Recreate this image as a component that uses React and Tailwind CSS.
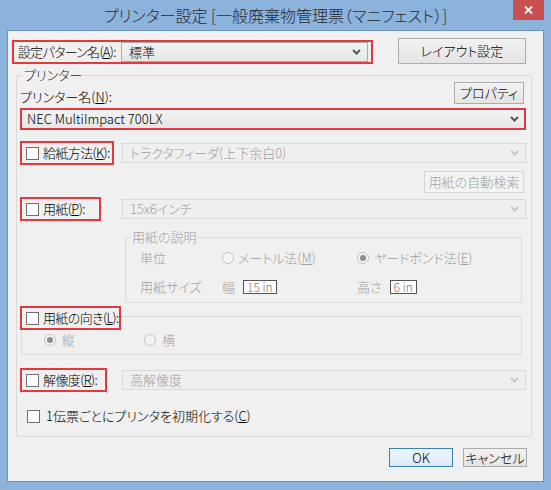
import React from "react";
import clsx from "clsx";

// Win8-style printer settings dialog

const Key = ({ children }) => (
  <span className="underline underline-offset-[1px] decoration-1">{children}</span>
);

const Chevron = ({ disabled = false }) => (
  <svg width="9" height="6" viewBox="0 0 9 6" className="shrink-0">
    <path
      d="M1 1l3.5 3.5L8 1"
      fill="none"
      stroke={disabled ? "#c8c8c8" : "#555555"}
      strokeWidth="2"
    />
  </svg>
);

const Select = ({ value, disabled = false, className }) => (
  <div
    className={clsx(
      "flex items-center justify-between pl-[7px] pr-[6px] border",
      disabled
        ? "border-[#d9d9d9] bg-[#efefef] text-[#a0a0a0]"
        : "border-[#acacac] bg-linear-to-b from-[#f3f3f3] to-[#e6e6e6] text-black",
      className
    )}>
    <span className="whitespace-nowrap">{value}</span>
    <Chevron disabled={disabled} />
  </div>
);

const Button = ({ children, disabled = false, primary = false, className }) => (
  <div
    className={clsx(
      "flex items-center justify-center border whitespace-nowrap",
      disabled && "border-[#d5d5d5] bg-[#f4f4f4] text-[#a0a0a0]",
      primary &&
        "border-[#3c7fb1] bg-linear-to-b from-[#edf5fc] to-[#dcebfa] text-black",
      !disabled &&
        !primary &&
        "border-[#acacac] bg-linear-to-b from-[#f2f2f2] to-[#e4e4e4] text-black",
      className
    )}>
    {children}
  </div>
);

const Checkbox = () => (
  <div className="w-[13px] h-[13px] shrink-0 border border-[#707070] bg-white" />
);

const Radio = ({ checked = false }) => (
  <div className="w-[12px] h-[12px] shrink-0 rounded-full border border-[#c4c4c4] bg-[#f4f4f4] flex items-center justify-center">
    {checked && <div className="w-[6px] h-[6px] rounded-full bg-[#8c8c8c]" />}
  </div>
);

const RedBox = ({ className, children }) => (
  <div
    className={clsx(
      "flex items-center border-2 border-[#e0393e] whitespace-nowrap",
      className
    )}>
    {children}
  </div>
);

const CheckLabel = ({ children }) => (
  <div className="flex items-center gap-[4px] pl-[4px] tracking-[-0.6px]">
    <Checkbox />
    <span className="whitespace-nowrap">{children}</span>
  </div>
);

const App = () => {
  return (
    <div className="w-[551px] h-[490px] bg-[#8cb3dc] flex flex-col text-[13px] leading-[16px] font-light font-['Noto_Sans_CJK_JP',sans-serif] [font-feature-settings:'palt'] select-none">
      {/* title bar */}
      <div className="h-[30px] flex items-start">
        <div className="w-[38px]" />
        <div className="flex-1 text-center text-[16px] leading-[30px] text-[#2a2a2a]">
          プリンター設定 [一般廃棄物管理票（マニフェスト）]
        </div>
        <div className="w-[31px] h-[20px] mr-[7px] bg-[#c75050] flex items-center justify-center">
          <svg width="9" height="8" viewBox="0 0 9 8">
            <path d="M1 0.5l7 7M8 0.5l-7 7" stroke="#fff" strokeWidth="1.8" />
          </svg>
        </div>
      </div>

      {/* client area */}
      <div className="mx-[7px] h-[452px] border border-[#6f93bd] bg-[#f0f0f0] flex flex-col">
        {/* pattern row */}
        <div className="flex items-end pt-[7px]">
          <RedBox className="ml-[4px] w-[361px] h-[24px]">
            <div className="w-[107px] pl-[4px] tracking-[-0.7px]">
              設定パターン名(<Key>A</Key>):
            </div>
            <Select value="標準" className="w-[247px] h-[20px]" />
          </RedBox>
          <Button className="ml-[25px] w-[128px] h-[26px]">レイアウト設定</Button>
        </div>

        {/* printer group */}
        <div className="relative mt-[11px] ml-[8px] w-[516px] h-[362px] border border-[#dadada] rounded-[2px] flex flex-col">
          <span className="absolute left-[6px] top-[-9px] px-[1px] bg-[#f0f0f0] text-[#2a2a2a]">
            プリンター
          </span>

          <div className="flex items-end justify-between pt-[6px] pl-[3px] pr-[7px]">
            <span className="mb-[-1px]">
              プリンター名(<Key>N</Key>):
            </span>
            <Button className="w-[70px] h-[22px]">プロパティ</Button>
          </div>

          <div className="mt-[4px] ml-[3px] w-[506px] h-[22px] border-2 border-[#e0393e] bg-linear-to-b from-[#f3f3f3] to-[#e6e6e6] flex items-center justify-between pl-[5px] pr-[5px]">
            <span>NEC MultiImpact 700LX</span>
            <Chevron />
          </div>

          <div className="mt-[11px] flex items-center">
            <RedBox className="ml-[3px] w-[94px] h-[24px]">
              <CheckLabel>
                給紙方法(<Key>K</Key>):
              </CheckLabel>
            </RedBox>
            <Select
              disabled
              value="トラクタフィーダ(上下余白0)"
              className="ml-[8px] w-[404px] h-[20px]"
            />
          </div>

          <div className="mt-[6px] flex justify-end pr-[7px]">
            <Button disabled className="w-[100px] h-[22px]">
              用紙の自動検索
            </Button>
          </div>

          <div className="mt-[4px] flex items-center">
            <RedBox className="ml-[3px] w-[81px] h-[24px]">
              <CheckLabel>
                用紙(<Key>P</Key>):
              </CheckLabel>
            </RedBox>
            <Select
              disabled
              value="15x6インチ"
              className="ml-[21px] w-[404px] h-[20px]"
            />
          </div>

          {/* paper description */}
          <div className="relative mt-[16px] ml-[108px] w-[397px] h-[66px] border border-[#dadada] rounded-[2px] text-[#a0a0a0]">
            <span className="absolute left-[5px] top-[-9px] px-[1px] bg-[#f0f0f0]">
              用紙の説明
            </span>
            <div className="grid grid-cols-[82px_135px_1fr] gap-y-[13px] pt-[12px] pl-[14px]">
              <span className="h-[16px]">単位</span>
              <div className="flex items-center gap-[4px]">
                <Radio />
                <span>
                  メートル法(<Key>M</Key>)
                </span>
              </div>
              <div className="flex items-center gap-[5px]">
                <Radio checked />
                <span>
                  ヤードポンド法(<Key>E</Key>)
                </span>
              </div>
              <span className="h-[16px]">用紙サイズ</span>
              <div className="flex items-center gap-[8px]">
                <span>幅</span>
                <div className="h-[14px] px-[3px] border border-[#555] bg-white text-[#7a7a7a] text-[12px] leading-[12px] flex items-center">
                  15 in
                </div>
              </div>
              <div className="flex items-center gap-[8px]">
                <span>高さ</span>
                <div className="h-[14px] px-[3px] border border-[#555] bg-white text-[#7a7a7a] text-[12px] leading-[12px] flex items-center">
                  6 in
                </div>
              </div>
            </div>
          </div>

          {/* orientation */}
          <div className="relative mt-[13px] ml-[4px] w-[501px] h-[39px] border border-[#dadada] rounded-[2px] text-[#a0a0a0] flex items-center pt-[8px] pl-[22px]">
            <RedBox className="absolute left-[-2px] top-[-11px] w-[101px] h-[24px] bg-[#f0f0f0] text-black">
              <CheckLabel>
                用紙の向き(<Key>L</Key>):
              </CheckLabel>
            </RedBox>
            <div className="w-[100px] flex items-center gap-[6px]">
              <Radio checked />
              <span>縦</span>
            </div>
            <div className="flex items-center gap-[6px]">
              <Radio />
              <span>横</span>
            </div>
          </div>

          <div className="mt-[13px] flex items-center">
            <RedBox className="ml-[3px] w-[87px] h-[24px]">
              <CheckLabel>
                解像度(<Key>R</Key>):
              </CheckLabel>
            </RedBox>
            <Select
              disabled
              value="高解像度"
              className="ml-[15px] w-[404px] h-[20px]"
            />
          </div>

          <div className="mt-[16px] pl-[10px] flex items-center gap-[6px]">
            <Checkbox />
            <span>
              1伝票ごとにプリンタを初期化する(<Key>C</Key>)
            </span>
          </div>
        </div>

        {/* footer */}
        <div className="mt-[11px] flex justify-end pr-[16px]">
          <Button primary className="w-[64px] h-[19px]">
            OK
          </Button>
          <Button className="ml-[10px] w-[64px] h-[19px]">キャンセル</Button>
        </div>
      </div>
    </div>
  );
};

export default App;
